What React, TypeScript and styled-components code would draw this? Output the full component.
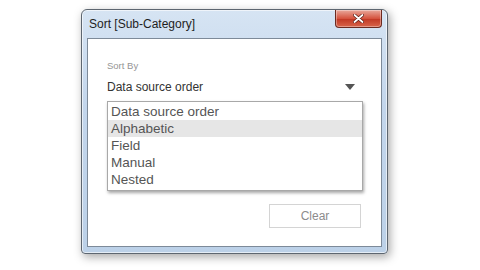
import { createGlobalStyle, styled } from "styled-components";

const Global = createGlobalStyle`
  html, body { margin: 0; padding: 0; background: #fff; }
  body { font-family: "Segoe UI", "Liberation Sans", Arial, sans-serif; }
`;

const Page = styled.div`
  width: 480px;
  height: 270px;
  padding: 9px 0 0 81px;
  box-sizing: border-box;
  overflow: hidden;
`;

const Window = styled.div`
  width: 307px;
  height: 245px;
  box-sizing: border-box;
  border: 1px solid #5d6670;
  border-radius: 6px 6px 4px 4px;
  background: linear-gradient(180deg, #d6e4f3 0%, #c3d6ec 40%, #bcd1e8 100%);
  box-shadow: 2px 3px 10px rgba(0, 0, 0, 0.35), inset 0 0 0 1px rgba(255, 255, 255, 0.6);
  display: flex;
  flex-direction: column;
  padding: 0 5px 6px 5px;
`;

const TitleBar = styled.div`
  height: 28px;
  display: flex;
  align-items: flex-start;
  justify-content: space-between;
`;

const Title = styled.span`
  font-size: 12px;
  color: #1e1e1e;
  margin: 7px 0 0 2px;
`;

const CloseButton = styled.div`
  width: 47px;
  height: 18px;
  border: 1px solid #6b2a20;
  border-top: none;
  border-radius: 0 0 4px 4px;
  background: linear-gradient(180deg, #e9a99c 0%, #d5533e 50%, #c23a26 55%, #d8644a 100%);
  box-shadow: inset 0 0 0 1px rgba(255, 255, 255, 0.35);
  display: flex;
  align-items: center;
  justify-content: center;
  box-sizing: border-box;
`;

const Panel = styled.div`
  flex: 1;
  background: #fff;
  border: 1px solid #7d8a99;
  padding: 21px 19px 0 19px;
  display: flex;
  flex-direction: column;
`;

const Label = styled.div`
  font-size: 9.5px;
  color: #959595;
  line-height: 12px;
`;

const Select = styled.div`
  display: flex;
  align-items: center;
  justify-content: space-between;
  margin-top: 7px;
  height: 15px;
  font-size: 12px;
  color: #333;
  padding-right: 7px;
`;

const Arrow = styled.span`
  width: 0;
  height: 0;
  border-left: 5px solid transparent;
  border-right: 5px solid transparent;
  border-top: 6px solid #555;
`;

const List = styled.div`
  margin-top: 7px;
  width: 256px;
  box-sizing: border-box;
  border: 1px solid #a8a8a8;
  box-shadow: 1px 2px 3px rgba(0, 0, 0, 0.35);
  padding: 1px 0 2px;
`;

const Item = styled.div<{ $active?: boolean }>`
  height: 17px;
  line-height: 17px;
  font-size: 13.5px;
  color: #555;
  padding-left: 3px;
  background: ${({ $active }) => ($active ? "#e6e6e6" : "transparent")};
`;

const Footer = styled.div`
  display: flex;
  justify-content: flex-end;
  margin-top: 13px;
`;

const Button = styled.div`
  width: 92px;
  height: 24px;
  box-sizing: border-box;
  border: 1px solid #d4d4d4;
  display: flex;
  align-items: center;
  justify-content: center;
  font-size: 12px;
  color: #8c8c8c;
  margin-right: 1px;
`;

const items = ["Data source order", "Alphabetic", "Field", "Manual", "Nested"];

export default function App() {
  return (
    <Page>
      <Global />
      <Window>
        <TitleBar>
          <Title>Sort [Sub-Category]</Title>
          <CloseButton>
            <svg width="11" height="9" viewBox="0 0 11 9">
              <path d="M1.5 1 L9.5 8 M9.5 1 L1.5 8" stroke="#5a1a12" strokeWidth="3.2" strokeLinecap="round" />
              <path d="M1.5 1 L9.5 8 M9.5 1 L1.5 8" stroke="#fff" strokeWidth="1.8" strokeLinecap="round" />
            </svg>
          </CloseButton>
        </TitleBar>
        <Panel>
          <Label>Sort By</Label>
          <Select>
            <span>Data source order</span>
            <Arrow />
          </Select>
          <List>
            {items.map((it) => (
              <Item key={it} $active={it === "Alphabetic"}>
                {it}
              </Item>
            ))}
          </List>
          <Footer>
            <Button>Clear</Button>
          </Footer>
        </Panel>
      </Window>
    </Page>
  );
}
